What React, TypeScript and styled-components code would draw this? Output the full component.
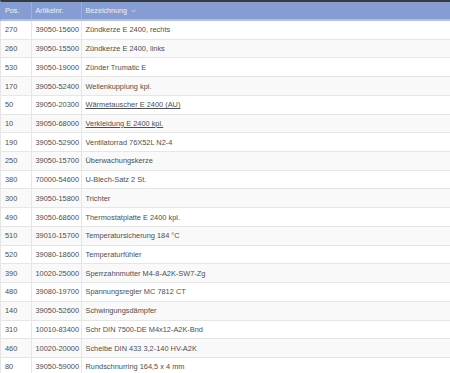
import React from 'react';
import styled, { createGlobalStyle } from 'styled-components';

const GlobalStyle = createGlobalStyle`
  html, body {
    margin: 0;
    padding: 0;
    background: #ffffff;
    overflow: hidden;
  }
  body {
    font-family: "Liberation Sans", Arial, sans-serif;
  }
`;

// Parts list as it comes from the spare parts catalogue
interface Part {
  pos: string;
  article: string;
  name: string;
  linked?: boolean;
}

const parts: Part[] = [
  { pos: '270', article: '39050-15600', name: 'Zündkerze E 2400, rechts' },
  { pos: '260', article: '39050-15500', name: 'Zündkerze E 2400, links' },
  { pos: '530', article: '39050-19000', name: 'Zünder Trumatic E' },
  { pos: '170', article: '39050-52400', name: 'Wellenkupplung kpl.' },
  { pos: '50', article: '39050-20300', name: 'Wärmetauscher E 2400 (AU)', linked: true },
  { pos: '10', article: '39050-68000', name: 'Verkleidung E 2400 kpl.', linked: true },
  { pos: '190', article: '39050-52900', name: 'Ventilatorrad 76X52L N2-4' },
  { pos: '250', article: '39050-15700', name: 'Überwachungskerze' },
  { pos: '380', article: '70000-54600', name: 'U-Blech-Satz 2 St.' },
  { pos: '300', article: '39050-15800', name: 'Trichter' },
  { pos: '490', article: '39050-68600', name: 'Thermostatplatte E 2400 kpl.' },
  { pos: '510', article: '39010-15700', name: 'Temperatursicherung 184 °C' },
  { pos: '520', article: '39080-18600', name: 'Temperaturfühler' },
  { pos: '390', article: '10020-25000', name: 'Sperrzahnmutter M4-8-A2K-SW7-Zg' },
  { pos: '480', article: '39080-19700', name: 'Spannungsregler MC 7812 CT' },
  { pos: '140', article: '39050-52600', name: 'Schwingungsdämpfer' },
  { pos: '310', article: '10010-83400', name: 'Schr DIN 7500-DE M4x12-A2K-Bnd' },
  { pos: '460', article: '10020-20000', name: 'Scheibe DIN 433 3,2-140 HV-A2K' },
  { pos: '80', article: '39050-59000', name: 'Rundschnurring 164,5 x 4 mm' },
];

// dividers land at x=31 and x=81 once the 1px outer border is added
const COLUMNS = '30px 50px 1fr';

const Table = styled.div`
  width: 450px;
  display: flex;
  flex-direction: column;
  font-size: 7.4px;
`;

const HeaderRow = styled.div`
  display: grid;
  grid-template-columns: ${COLUMNS};
  height: 21px;
  box-sizing: border-box;
  background: #869dd3;
  border-top: 2px solid #363c3c;
  border-bottom: 2px solid #b2bfe4;
  border-left: 1px solid #869dd3;
`;

const HeaderCell = styled.div`
  display: flex;
  align-items: center;
  gap: 4px;
  padding-left: 3.5px;
  color: #eef1fa;
  font-size: 7.2px;
  border-left: 1px solid #9cafdd;

  &:first-child {
    border-left: none;
    padding-left: 4px;
  }
`;

const SortCaret = styled.svg`
  width: 5px;
  height: 4px;
  margin-top: 1px;
`;

const Row = styled.div<{ $striped: boolean }>`
  display: grid;
  grid-template-columns: ${COLUMNS};
  height: 18.72px;
  box-sizing: border-box;
  background: ${(p) => (p.$striped ? '#f9f9f9' : '#ffffff')};
  border-bottom: 1px solid #e6e6e6;
  border-left: 1px solid #e6e6e6;
`;

const Cell = styled.div`
  display: flex;
  align-items: center;
  padding-left: 3.5px;
  color: #4e4e4e;
  white-space: nowrap;
  border-left: 1px solid #e6e6e6;

  &:first-child {
    border-left: none;
    padding-left: 4px;
  }
`;

const PartLink = styled.span`
  color: #4e4e4e;
  text-decoration: underline;
  text-underline-offset: 1px;
`;

export default function App() {
  return (
    <>
      <GlobalStyle />
      <Table>
        <HeaderRow>
          <HeaderCell>Pos.</HeaderCell>
          <HeaderCell>Artikelnr.</HeaderCell>
          <HeaderCell>
            Bezeichnung
            <SortCaret viewBox="0 0 5 4">
              <path d="M0.5 0.8 L2.5 3 L4.5 0.8" fill="none" stroke="#c6d1ee" strokeWidth="1" />
            </SortCaret>
          </HeaderCell>
        </HeaderRow>
        {parts.map((part, i) => (
          <Row key={part.pos + '_' + i} $striped={i % 2 === 1}>
            <Cell>{part.pos}</Cell>
            <Cell>{part.article}</Cell>
            <Cell>{part.linked ? <PartLink>{part.name}</PartLink> : part.name}</Cell>
          </Row>
        ))}
      </Table>
    </>
  );
}
